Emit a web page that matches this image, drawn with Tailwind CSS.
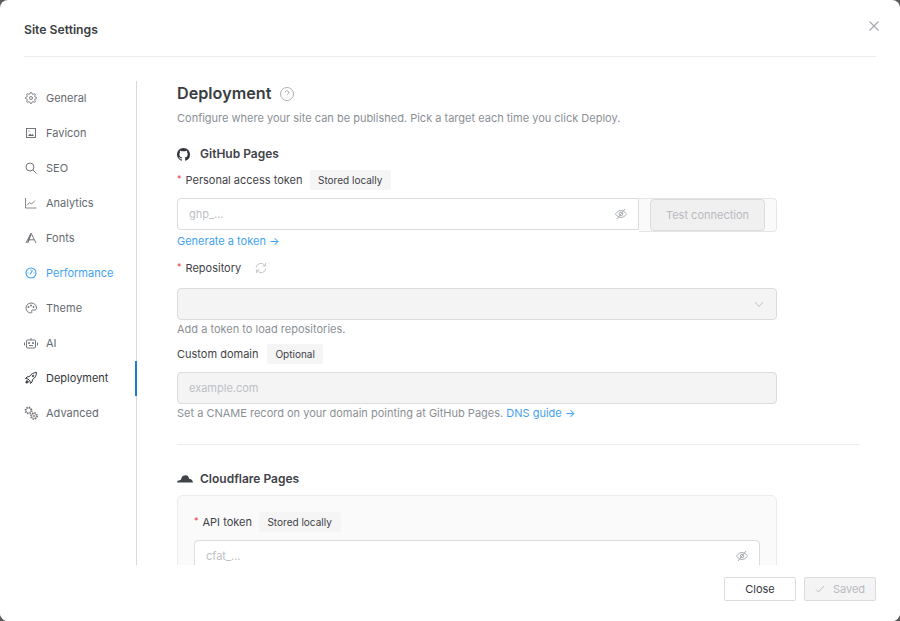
<!DOCTYPE html>
<html lang="en">
<head>
    <meta charset="UTF-8">
    <meta name="viewport" content="width=device-width, initial-scale=1.0">
    <title>Site Settings</title>
    <script src="https://cdn.jsdelivr.net/npm/@tailwindcss/browser@4"></script>
</head>
<body class="bg-[#5a5a5a] font-['Inter',sans-serif] text-[11px] leading-[18px] text-[#3f4248] overflow-hidden">
    <div class="w-[900px] h-[621px] bg-white rounded-[8px] flex flex-col overflow-hidden">
        <!-- header -->
        <div class="mx-6 h-[57px] shrink-0 border-b border-[#ececec] flex items-start justify-between">
            <h1 class="mt-[21px] text-[12.2px] leading-[18px] font-semibold text-[#3a3d42]">Site Settings</h1>
            <svg class="mt-[20px] -mr-[4px] w-[12px] h-[12px] text-[#a3a7ad]" viewBox="0 0 12 12" fill="none" stroke="currentColor" stroke-width="1.1"><path d="M1.5 1.5l9 9M10.5 1.5l-9 9"/></svg>
        </div>

        <div class="flex flex-1 min-h-0 mt-6">
            <!-- sidebar -->
            <nav class="ml-6 w-[113px] shrink-0 border-r border-[#d9d9d9] relative">
                <a class="h-[35px] -mt-px pl-px flex items-center gap-[9px] text-[#66696f]">
                    <svg class="w-[12px] h-[12px]" viewBox="0 0 24 24" fill="none" stroke="currentColor" stroke-width="1.7"><circle cx="12" cy="12" r="3"/><path d="M19.4 15a1.7 1.7 0 0 0 .3 1.8l.1.1a2 2 0 1 1-2.8 2.8l-.1-.1a1.7 1.7 0 0 0-2.9 1.2V21a2 2 0 1 1-4 0v-.1a1.7 1.7 0 0 0-2.9-1.2l-.1.1a2 2 0 1 1-2.8-2.8l.1-.1a1.7 1.7 0 0 0-1.2-2.9H3a2 2 0 1 1 0-4h.1a1.7 1.7 0 0 0 1.2-2.9l-.1-.1a2 2 0 1 1 2.8-2.8l.1.1a1.7 1.7 0 0 0 2.9-1.2V3a2 2 0 1 1 4 0v.1a1.7 1.7 0 0 0 2.9 1.2l.1-.1a2 2 0 1 1 2.8 2.8l-.1.1a1.7 1.7 0 0 0 1.2 2.9h.1a2 2 0 1 1 0 4h-.1a1.7 1.7 0 0 0-1.5 1z"/></svg>
                    General
                </a>
                <a class="h-[35px] pl-px flex items-center gap-[9px] text-[#66696f]">
                    <svg class="w-[12px] h-[12px]" viewBox="0 0 12 12" fill="none" stroke="currentColor" stroke-width="0.9"><rect x="1.500" y="1.500" width="9" height="9"/><path d="M3 9l2-2.500 1.500 1.500 1-1 1.500 2z" fill="currentColor" stroke="none"/><circle cx="4" cy="4" r=".6" fill="currentColor" stroke="none"/></svg>
                    Favicon
                </a>
                <a class="h-[35px] pl-px flex items-center gap-[9px] text-[#66696f]">
                    <svg class="w-[12px] h-[12px]" viewBox="0 0 12 12" fill="none" stroke="currentColor" stroke-width="0.9"><circle cx="5" cy="5" r="4"/><path d="M8 8l3.500 3.500"/></svg>
                    SEO
                </a>
                <a class="h-[35px] pl-px flex items-center gap-[9px] text-[#66696f]">
                    <svg class="w-[12px] h-[12px]" viewBox="0 0 12 12" fill="none" stroke="currentColor" stroke-width="0.8"><path d="M.5 1v10h11M2 8.500l2.500-3 2 1.500L10 3.500"/></svg>
                    Analytics
                </a>
                <a class="h-[35px] pl-px flex items-center gap-[9px] text-[#66696f]">
                    <svg class="w-[12px] h-[12px]" viewBox="0 0 12 12" fill="none"><path d="M1 11L6 1l5 10M3 7.800h6" stroke="currentColor" stroke-width="0.9"/><path d="M5.500 2L2 10.800h1.500L6.300 3z" fill="currentColor"/></svg>
                    Fonts
                </a>
                <a class="h-[35px] pl-px flex items-center gap-[9px] text-[#3fa2f0]">
                    <svg class="w-[12px] h-[12px]" viewBox="0 0 12 12" fill="none" stroke="currentColor" stroke-width="1.1"><circle cx="6" cy="6" r="5"/><path d="M5 7.500L7.500 3.500M2.500 6h1M8.500 6h1M6 2.500v1"/></svg>
                    Performance
                </a>
                <a class="h-[35px] pl-px flex items-center gap-[9px] text-[#66696f]">
                    <svg class="w-[12px] h-[12px]" viewBox="0 0 12 12" fill="none" stroke="currentColor" stroke-width="0.9"><path d="M6 1a5 5 0 1 0 0 10c1 0 1-1 .7-1.600C6.300 8.500 7 8 7.800 8H10c1 0 1.500-.8 1.500-2C11.500 3 9 1 6 1z"/><circle cx="3.500" cy="5" r=".6" fill="currentColor"/><circle cx="6" cy="3.500" r=".6" fill="currentColor"/><circle cx="8.500" cy="5" r=".6" fill="currentColor"/></svg>
                    Theme
                </a>
                <a class="h-[35px] pl-px flex items-center gap-[9px] text-[#66696f]">
                    <svg class="w-[14px] h-[12px] -ml-[1px] -mr-[1px]" viewBox="0 0 14 12" fill="none" stroke="currentColor" stroke-width="0.9"><rect x="2.500" y="3" width="9" height="8" rx="1"/><path d="M7 3V1M.5 5.500v3M13.500 5.500v3M5 8.500h4"/><circle cx="5" cy="6" r=".6" fill="currentColor"/><circle cx="9" cy="6" r=".6" fill="currentColor"/></svg>
                    AI
                </a>
                <a class="h-[35px] pl-px flex items-center gap-[9px] text-[#33363b] relative">
                    <svg class="w-[12px] h-[12px]" viewBox="0 0 12 12" fill="none" stroke="currentColor" stroke-width="1"><path d="M11.500.5C8.500.5 6 2 4.500 4.500L2 5 .5 6.500 3 7l2 2 .5 2.500L7 10l.5-2.500C10 6 11.500 3.500 11.500.5z"/><circle cx="8" cy="4" r=".8"/><path d="M2 8.500c-.8.5-1 1.500-1 2.500 1 0 2-.2 2.500-1z" fill="currentColor"/></svg>
                    Deployment
                    <span class="absolute right-[-1px] top-px h-[35px] w-[2px] bg-[#1a7fd4]"></span>
                </a>
                <a class="h-[35px] flex items-center gap-[9px] text-[#66696f]">
                    <svg class="w-[14px] h-[14px] -mr-px" viewBox="0 0 14 14" fill="none" stroke="currentColor"><circle cx="4.500" cy="4.500" r="3.300" stroke-width="1.300" stroke-dasharray="1.300 1.300"/><circle cx="4.500" cy="4.500" r="2.500" stroke-width="0.7"/><circle cx="10" cy="10" r="3.300" stroke-width="1.300" stroke-dasharray="1.300 1.300"/><circle cx="10" cy="10" r="2.500" stroke-width="0.7"/><circle cx="10" cy="10" r=".8" stroke-width="0.7"/></svg>
                    Advanced
                </a>
            </nav>

            <!-- content -->
            <main class="flex-1 min-w-0 overflow-hidden pl-10 pr-10">
                <div class="flex items-center gap-[9px]">
                    <h2 class="text-[16.2px] leading-[24px] font-semibold text-[#3a3d42]">Deployment</h2>
                    <svg class="w-[14px] h-[14px] mt-[2px] text-[#a3a7ad]" viewBox="0 0 14 14" fill="none" stroke="currentColor" stroke-width="0.9"><circle cx="7" cy="7" r="6.500"/><path d="M5.200 5.500a1.800 1.800 0 1 1 2.700 1.500c-.6.400-.9.700-.9 1.300M7 10.200v.6"/></svg>
                </div>
                <p class="mt-[4px] text-[#8b8f96]">Configure where your site can be published. Pick a target each time you click Deploy.</p>

                <div class="mt-[18px] flex items-center gap-[10px]">
                    <svg class="w-[13px] h-[13px] text-[#33363b]" viewBox="0 0 16 16" fill="currentColor"><path d="M8 0C3.580 0 0 3.580 0 8c0 3.540 2.290 6.530 5.470 7.590.4.070.55-.17.55-.38 0-.19-.01-.82-.01-1.490-2.010.37-2.530-.49-2.690-.94-.09-.23-.48-.94-.82-1.130-.28-.15-.68-.52-.01-.53.630-.01 1.080.58 1.230.82.720 1.210 1.870.87 2.330.66.070-.52.280-.87.510-1.070-1.780-.2-3.640-.89-3.640-3.950 0-.87.310-1.590.820-2.150-.08-.2-.36-1.020.08-2.120 0 0 .67-.21 2.200.82.640-.18 1.320-.27 2-.27s1.360.09 2 .27c1.530-1.040 2.200-.82 2.200-.82.440 1.100.160 1.920.08 2.120.51.560.82 1.270.82 2.150 0 3.070-1.870 3.750-3.650 3.950.29.250.54.730.54 1.480 0 1.070-.01 1.930-.01 2.200 0 .21.150.46.550.38A8.010 8.010 0 0 0 16 8c0-4.420-3.580-8-8-8z"/></svg>
                    <span class="text-[12px] font-semibold text-[#3f4248]">GitHub Pages</span>
                </div>

                <div class="mt-[7px] h-[20px] flex items-center">
                    <span class="text-[#e5383b] w-[8.500px] text-[9px] -mt-[2px]">*</span>
                    <span>Personal access token</span>
                    <span class="ml-[7.500px] pl-[8px] pr-[9px] h-[20px] leading-[20px] text-[10px] bg-[#f5f5f5] rounded-[2px]">Stored locally</span>
                </div>

                <div class="mt-[8px] w-[600px] h-[34px] flex">
                    <div class="flex-1 h-[32px] border border-[#dcdcdc] rounded-l-[4px] flex items-center justify-between pl-[11px] pr-[11px] bg-white">
                        <span class="text-[#bdbfc4]">ghp_...</span>
                        <svg class="w-[12px] h-[12px] text-[#a3a7ad]" viewBox="0 0 12 12" fill="none" stroke="currentColor" stroke-width="0.9"><path d="M.5 6s2-3.500 5.500-3.500S11.500 6 11.500 6 9.500 9.500 6 9.500.5 6 .5 6zM2 11L10 1"/><circle cx="6" cy="6" r="1.800"/></svg>
                    </div>
                    <div class="w-[138px] h-[34px] border border-l-0 border-[#e5e5e5] rounded-r-[4px] bg-[#fafafa] pl-[11px]">
                        <div class="w-[115px] h-[32px] border border-[#dcdcdc] rounded-[4px] bg-[#f0f0f0] flex items-center justify-center text-[#b8bac0]">Test connection</div>
                    </div>
                </div>

                <a class="block mt-0 text-[#3fa2f0]">Generate a token →</a>

                <div class="mt-[8px] h-[20px] flex items-center">
                    <span class="text-[#e5383b] w-[8.500px] text-[9px] -mt-[2px]">*</span>
                    <span>Repository</span>
                    <svg class="ml-[14px] w-[12px] h-[12px] text-[#bdbfc4]" viewBox="0 0 12 12" fill="none" stroke="currentColor" stroke-width="0.9"><path d="M1 5.500A5 5 0 0 1 10 3.500M11 6.500A5 5 0 0 1 2 8.500M10.500 1v3h-3M1.500 11V8h3"/></svg>
                </div>

                <div class="mt-[10px] w-[600px] h-[32px] border border-[#dcdcdc] rounded-[4px] bg-[#f4f4f4] flex items-center justify-end pr-[12px]">
                    <svg class="w-[10px] h-[10px] text-[#b8bac0]" viewBox="0 0 10 10" fill="none" stroke="currentColor" stroke-width="0.9"><path d="M1 3l4 4.500L9 3"/></svg>
                </div>
                <p class="text-[#8b8f96]">Add a token to load repositories.</p>

                <div class="mt-[6px] h-[20px] flex items-center">
                    <span>Custom domain</span>
                    <span class="ml-[9px] px-[8px] h-[20px] leading-[20px] text-[10px] bg-[#f5f5f5] rounded-[2px]">Optional</span>
                </div>

                <div class="mt-[8px] w-[600px] h-[32px] border border-[#dcdcdc] rounded-[4px] bg-[#f4f4f4] flex items-center pl-[11px] text-[#bdbfc4]">example.com</div>
                <p class="text-[#8b8f96]">Set a CNAME record on your domain pointing at GitHub Pages. <a class="text-[#3fa2f0]">DNS guide →</a></p>

                <div class="mt-[22px] h-px bg-[#ececec]"></div>

                <div class="mt-[25px] flex items-center gap-[7px]">
                    <svg class="w-[16px] h-[8px] -mt-px text-[#3f4248]" viewBox="0 0 16 8" fill="currentColor"><path d="M0 7.500C.2 6 1.300 5.200 2.800 5.300 3.500 5 4 4.500 4.300 3.500 4.800 1.500 6.500.3 8.500.3 10.800.3 11.800 1.800 12 3.800 14 3.800 15.800 5.500 16 7.500z"/></svg>
                    <span class="text-[12px] font-semibold text-[#3f4248]">Cloudflare Pages</span>
                </div>

                <div class="mt-[7px] w-[600px] border border-[#ececec] rounded-[6px] bg-[#fafafa] px-4 pt-[16px] pb-4">
                    <div class="h-[20px] flex items-center">
                        <span class="text-[#e5383b] w-[8.500px] text-[9px] -mt-[2px]">*</span>
                        <span>API token</span>
                        <span class="ml-[7.500px] pl-[8px] pr-[9px] h-[20px] leading-[20px] text-[10px] bg-[#f5f5f5] rounded-[2px]">Stored locally</span>
                    </div>
                    <div class="mt-[8px] h-[32px] border border-[#dcdcdc] rounded-[4px] bg-white flex items-center justify-between pl-[11px] pr-[11px]">
                        <span class="text-[#bdbfc4]">cfat_...</span>
                        <svg class="w-[12px] h-[12px] text-[#a3a7ad]" viewBox="0 0 12 12" fill="none" stroke="currentColor" stroke-width="0.9"><path d="M.5 6s2-3.500 5.500-3.500S11.500 6 11.500 6 9.500 9.500 6 9.500.5 6 .5 6zM2 11L10 1"/><circle cx="6" cy="6" r="1.800"/></svg>
                    </div>
                </div>
            </main>
        </div>

        <!-- footer -->
        <div class="h-[56px] shrink-0 bg-white flex items-start justify-end gap-2 pr-6 pt-[12px]">
            <button class="w-[72px] h-[24px] border border-[#dcdcdc] rounded-[2px] bg-white text-[#33363b]">Close</button>
            <button class="w-[72px] h-[24px] border border-[#dcdcdc] rounded-[2px] bg-[#f4f4f4] text-[#b8bac0] flex items-center justify-center gap-[8px]">
                <svg class="w-[10px] h-[10px]" viewBox="0 0 10 10" fill="none" stroke="currentColor" stroke-width="0.9"><path d="M1 5.500l2.500 2.500L9 2"/></svg>
                Saved
            </button>
        </div>
    </div>
</body>
</html>
